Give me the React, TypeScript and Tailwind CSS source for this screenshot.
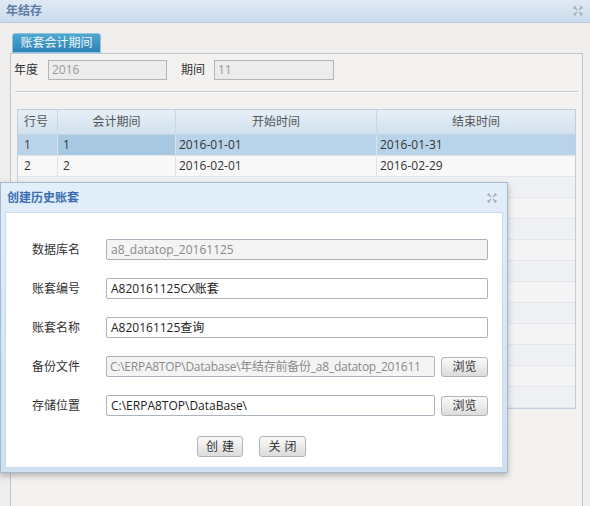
import React from 'react';

const FONT = { fontFamily: '"Open Sans", "Noto Sans CJK SC", sans-serif' };

// small grey close glyph used on both window title bars
function CloseIcon() {
  return (
    <svg width="10" height="10" viewBox="0 0 10 10" className="text-[#a3acb6]">
      <path d="M1 1L4 4M9 1L6 4M1 9L4 6M9 9L6 6" stroke="currentColor" strokeWidth="1.3" fill="none" />
      <path d="M1 1h2M1 1v2M9 1h-2M9 1v2M1 9h2M1 9v-2M9 9h-2M9 9v-2" stroke="currentColor" strokeWidth="1" fill="none" />
    </svg>
  );
}

const periods = [
  { row: '1', period: '1', start: '2016-01-01', end: '2016-01-31' },
  { row: '2', period: '2', start: '2016-02-01', end: '2016-02-29' },
];

const EMPTY_ROWS = 11;

function Field({ label, value, disabled, browse, tight }: { label: string; value: string; disabled?: boolean; browse?: boolean; tight?: boolean }) {
  return (
    <div className="flex items-center h-[21px]">
      <span className="w-[74px] text-[12px] text-[#333]">{label}</span>
      <div
        className={`h-[21px] ${browse ? 'w-[329px]' : 'w-[382px]'} border border-[#a9b4be] rounded-[2px] ${tight ? 'pl-[3px] pr-[1px] tracking-[-0.25px]' : 'px-[4px]'} flex items-center overflow-hidden whitespace-nowrap text-[12px] ${
          disabled ? 'bg-[#f4f4f4] text-[#8a8a8a]' : 'bg-white text-[#222]'
        }`}
      >
        {value}
      </div>
      {browse && (
        <button className="ml-[6px] w-[47px] h-[20px] border border-[#b3b3b3] rounded-[3px] bg-gradient-to-b from-[#fafafa] to-[#dcdcdc] text-[12px] text-[#333] flex items-center justify-center">
          浏览
        </button>
      )}
    </div>
  );
}

export default function App() {
  return (
    <div className="relative w-[590px] h-[506px] overflow-hidden bg-[#efeeed]" style={FONT}>
      {/* Window title bar */}
      <div className="h-[23px] flex items-center justify-between px-[6px] bg-gradient-to-b from-[#dfe9f4] to-[#ccdcec] border-b border-[#b9cadc]">
        <span className="text-[12px] font-bold text-[#5a7ba6]">年结存</span>
        <span className="mr-[1px]"><CloseIcon /></span>
      </div>

      {/* Tab strip + panel */}
      <div className="pl-[10px] pr-[7px] pt-[10px]">
        <div className="ml-[2px] w-[89px] h-[20px] rounded-t-[3px] border border-[#8fc3de] bg-gradient-to-b from-[#4fa7d2] to-[#2b83b4] text-white/90 text-[12px] flex items-center justify-center">
          账套会计期间
        </div>
        <div className="h-[460px] border border-[#bcc8d4] bg-[#f3f2f1] px-[3px] pt-[6px]">
          <div className="flex items-center h-[20px] text-[12px] text-[#333]">
            <span className="w-[34px]">年度</span>
            <div className="w-[119px] h-[20px] border border-[#b2b6ba] bg-[#ececec] text-[#9a9a9a] px-[3px] flex items-center">2016</div>
            <span className="ml-[14px] w-[33px]">期间</span>
            <div className="w-[120px] h-[20px] border border-[#b2b6ba] bg-[#ececec] text-[#9a9a9a] px-[3px] flex items-center">11</div>
          </div>
          <div className="mt-[11px] mx-[1px] h-[2px] border-t border-[#c9c9c9] bg-white" />

          {/* Period table */}
          <div className="mt-[16px] mx-[3px] border border-[#c3ceda] bg-[#f5f5f5] text-[12px] text-[#333]">
            <div className="flex h-[25px] bg-gradient-to-b from-[#e6eff7] to-[#d2e1ee] border-b border-[#c3d3e2]">
              <div className="w-[40px] pl-[6px] flex items-center border-r border-[#c9d8e6] text-[#555]">行号</div>
              <div className="w-[118px] flex items-center justify-center border-r border-[#c9d8e6] text-[#555]">会计期间</div>
              <div className="w-[201px] flex items-center justify-center border-r border-[#c9d8e6] text-[#555]">开始时间</div>
              <div className="flex-1 flex items-center justify-center text-[#555]">结束时间</div>
            </div>
            {periods.map((p, i) => (
              <div key={p.row} className={`flex h-[21px] border-b border-[#e2e6ea] ${i === 0 ? 'bg-[#b9d4ea]' : 'bg-[#f8f8f8]'}`}>
                <div className="w-[40px] pl-[6px] flex items-center border-r border-[#dde3e8]">{p.row}</div>
                <div className={`w-[118px] pl-[5px] flex items-center border-r border-[#dde3e8] ${i === 0 ? 'bg-[#a9c9e3]' : ''}`}>{p.period}</div>
                <div className="w-[201px] pl-[3px] flex items-center border-r border-[#dde3e8]">{p.start}</div>
                <div className="flex-1 pl-[3px] flex items-center">{p.end}</div>
              </div>
            ))}
            {Array.from({ length: EMPTY_ROWS }).map((_, i) => (
              <div key={i} className={`h-[21px] border-b border-[#e2e6ea] ${i % 2 === 0 ? 'bg-[#eef0f4]' : 'bg-[#f4f4f4]'}`} />
            ))}
          </div>
        </div>
      </div>

      {/* Dialog: 创建历史账套 */}
      <div className="absolute left-0 top-[182px] w-[508px] h-[291px] border border-[#a7b8ca] bg-gradient-to-b from-[#e2eefa] to-[#cfe0f1] shadow-[0_3px_6px_rgba(0,0,0,0.25)] flex flex-col">
        <div className="h-[29px] flex items-center justify-between pl-[6px] pr-[10px]">
          <span className="text-[12px] font-bold text-[#3b6db3]">创建历史账套</span>
          <CloseIcon />
        </div>
        <div className="mx-[4px] mb-[4px] flex-1 bg-white border border-[#c8daec] pl-[26px] pt-[26px]">
          <div className="flex flex-col gap-[18px]">
            <Field label="数据库名" value="a8_datatop_20161125" disabled />
            <Field label="账套编号" value="A820161125CX账套" />
            <Field label="账套名称" value="A820161125查询" />
            <Field label="备份文件" value="C:\ERPA8TOP\Database\年结存前备份_a8_datatop_201611" disabled browse tight />
            <Field label="存储位置" value="C:\ERPA8TOP\DataBase\" browse />
          </div>
          <div className="mt-[20px] ml-[165px] flex gap-[16px]">
            <button className="w-[46px] h-[21px] border border-[#b3b3b3] rounded-[3px] bg-gradient-to-b from-[#fafafa] to-[#dcdcdc] text-[12px] text-[#333] tracking-[4px] pl-[4px]">创建</button>
            <button className="w-[47px] h-[21px] border border-[#b3b3b3] rounded-[3px] bg-gradient-to-b from-[#fafafa] to-[#dcdcdc] text-[12px] text-[#333] tracking-[4px] pl-[4px]">关闭</button>
          </div>
        </div>
      </div>
    </div>
  );
}
